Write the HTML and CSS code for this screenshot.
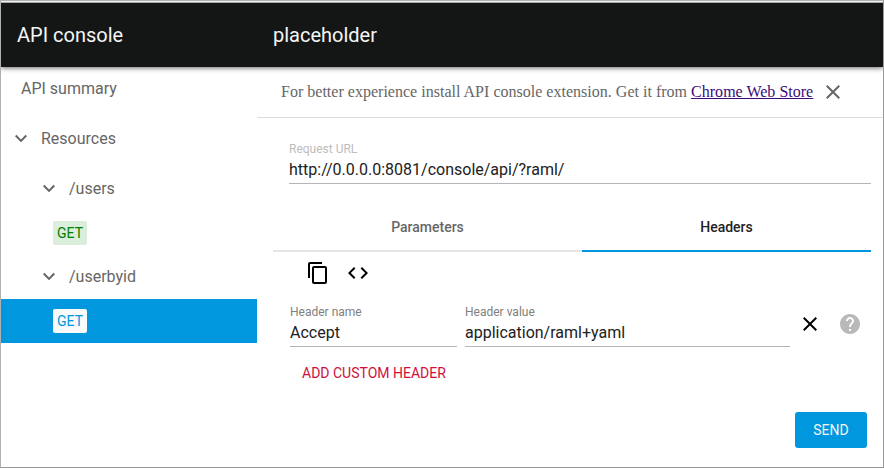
FILE: index.html
```html
<!DOCTYPE html>
<html lang="en">
<head>
<meta charset="utf-8">
<title>API console</title>
<link rel="stylesheet" href="styles.css">
</head>
<body>
<div class="window">
  <div class="edge"></div>
  <header class="toolbar">
    <div class="brand"><span>API console</span></div>
    <h1 class="title"><span>placeholder</span></h1>
  </header>
  <div class="body">
    <nav class="sidebar">
      <a class="row summary"><span>API summary</span></a>
      <a class="row group">
        <svg class="chevron" viewBox="0 0 24 24"><path d="M7.41 7.84L12 12.42l4.59-4.58L18 9.25l-6 6-6-6z"/></svg>
        <span>Resources</span>
      </a>
      <a class="row endpoint">
        <svg class="chevron" viewBox="0 0 24 24"><path d="M7.41 7.84L12 12.42l4.59-4.58L18 9.25l-6 6-6-6z"/></svg>
        <span>/users</span>
      </a>
      <a class="row method"><span class="badge">GET</span></a>
      <a class="row endpoint">
        <svg class="chevron" viewBox="0 0 24 24"><path d="M7.41 7.84L12 12.42l4.59-4.58L18 9.25l-6 6-6-6z"/></svg>
        <span>/userbyid</span>
      </a>
      <a class="row method selected"><span class="badge">GET</span></a>
    </nav>
    <main class="main">
      <div class="banner">
        <p class="notice">For better experience install API console extension. Get it from <a class="store">Chrome Web Store</a></p>
        <svg class="icon muted" viewBox="0 0 24 24"><path d="M19 6.41L17.59 5 12 10.59 6.41 5 5 6.41 10.59 12 5 17.59 6.41 19 12 13.41 17.59 19 19 17.59 13.41 12z"/></svg>
      </div>
      <div class="field url">
        <label class="label light">Request URL</label>
        <div class="value">http://0.0.0.0:8081/console/api/?raml/</div>
      </div>
      <div class="tabs">
        <div class="tab"><span>Parameters</span></div>
        <div class="tab active"><span>Headers</span></div>
      </div>
      <div class="tools">
        <svg class="icon" viewBox="0 0 24 24"><path d="M16 1H4c-1.1 0-2 .9-2 2v14h2V3h12V1zm3 4H8c-1.1 0-2 .9-2 2v14c0 1.1.9 2 2 2h11c1.1 0 2-.9 2-2V7c0-1.1-.9-2-2-2zm0 16H8V7h11v14z"/></svg>
        <svg class="icon" viewBox="0 0 24 24"><path d="M9.4 16.6L4.8 12l4.6-4.6L8 6l-6 6 6 6 1.4-1.4zm5.2 0l4.6-4.6-4.6-4.6L16 6l6 6-6 6-1.4-1.4z"/></svg>
      </div>
      <div class="header-form">
        <div class="field name">
          <label class="label">Header name</label>
          <div class="value">Accept</div>
        </div>
        <div class="field content">
          <label class="label">Header value</label>
          <div class="value">application/raml+yaml</div>
        </div>
        <div class="actions">
          <svg class="icon" viewBox="0 0 24 24"><path d="M19 6.41L17.59 5 12 10.59 6.41 5 5 6.41 10.59 12 5 17.59 6.41 19 12 13.41 17.59 19 19 17.59 13.41 12z"/></svg>
          <svg class="icon faint" viewBox="0 0 24 24"><path d="M12 2C6.48 2 2 6.48 2 12s4.48 10 10 10 10-4.48 10-10S17.52 2 12 2zm1 17h-2v-2h2v2zm2.07-7.75l-.9.92C13.45 12.9 13 13.5 13 15h-2v-.5c0-1.1.45-2.1 1.17-2.83l1.24-1.26c.37-.36.59-.86.59-1.41 0-1.1-.9-2-2-2s-2 .9-2 2H8c0-2.21 1.79-4 4-4s4 1.79 4 4c0 .88-.36 1.68-.93 2.25z"/></svg>
        </div>
      </div>
      <div class="add">ADD CUSTOM HEADER</div>
      <div class="footer"><button class="send">SEND</button></div>
    </main>
  </div>
</div>
</body>
</html>
```
FILE: styles.css
```css
* { box-sizing: border-box; }
body { margin: 0; font-family: Roboto, sans-serif; font-size: 16px; color: #212121; }
svg { display: block; flex: none; }

.window {
  width: 884px;
  height: 468px;
  border: 1px solid #999;
  border-left-color: #b0b0b0;
  border-top-color: #b0b0b0;
  background: #fff;
  display: flex;
  flex-direction: column;
  overflow: hidden;
}

.edge { flex: none; height: 2px; background: #f0f0f0; border-bottom: 1px solid #a8a8a8; }

.toolbar {
  flex: none;
  height: 64px;
  background: #141615;
  color: #f5f5f5;
  display: flex;
  align-items: center;
  box-shadow: 0 1px 5px rgba(0, 0, 0, .6);
  clip-path: inset(0 0 -10px 0);
  position: relative;
  font-size: 20px;
}
.brand { width: 256px; padding-left: 16px; }
.title { margin: 0; padding-left: 16px; font-size: 20px; font-weight: 400; }

.body { flex: 1; display: flex; min-height: 0; }

.sidebar { width: 256px; flex: none; color: #666; }
.row { display: flex; align-items: center; height: 44px; }
.row > span:not(.badge) { padding-bottom: 2px; }
.summary { padding-left: 20px; margin-bottom: 6px; }
.group { padding-left: 8px; margin-bottom: 6px; gap: 8px; }
.endpoint { padding-left: 36px; gap: 8px; }
.method { padding-left: 52px; }
.chevron { width: 24px; height: 24px; fill: #666; }
.badge {
  width: 34px;
  height: 24px;
  line-height: 24px;
  text-align: center;
  font-size: 14px;
  border-radius: 2px;
  background: #dbeedb;
  color: #008000;
}
.selected { background: #0097df; }
.selected .badge { background: #fafafa; color: #0097df; }

.main { flex: 1; display: flex; flex-direction: column; }
.banner {
  height: 51px;
  padding-left: 24px;
  border-bottom: 1px solid #dcdcdc;
  display: flex;
  align-items: center;
  gap: 8px;
}
.notice { margin: 0; font-family: "Liberation Serif", serif; font-size: 16px; letter-spacing: .013px; color: #666; white-space: nowrap; }
.store { color: #3b0b7c; text-decoration: underline; }
.icon { width: 24px; height: 24px; fill: #000; }
.muted { fill: #666; }
.faint { fill: #b9b9b9; }

.field { border-bottom: 1px solid #b5b5b5; }
.label { display: block; font-size: 12px; line-height: 16px; color: #808080; }
.light { color: #bcbcbc; }
.value { font-size: 16px; line-height: 24px; white-space: nowrap; }
.url { margin: 23px 12px 0 32px; height: 43px; }
.url .value { line-height: 25px; }

.tabs { display: flex; margin: 20px 12px 0 16px; height: 48px; font-size: 14px; font-weight: 500; }
.tab {
  width: 309px;
  border-bottom: 2px solid #e5e5e5;
  color: #666;
  display: flex;
  align-items: center;
  justify-content: center;
}
.active { width: 289px; border-color: #0097df; color: #212121; }

.tools { display: flex; gap: 16px; padding: 9px 0 0 49px; }
.header-form { display: flex; margin: 19px 0 0 33px; height: 43px; }
.name { width: 167px; margin-right: 8px; }
.content { width: 325px; }
.header-form .value { line-height: 26px; }
.actions { display: flex; gap: 16px; padding: 8px 0 0 8px; }
.add { margin: 16px 0 0 45px; height: 20px; line-height: 20px; font-size: 14px; color: #d0103a; }
.footer { display: flex; justify-content: flex-end; margin: 29px 16px 0 0; }
.send {
  width: 72px;
  height: 36px;
  padding: 0;
  border: 0;
  border-radius: 3px;
  background: #0097df;
  color: #f5f5f5;
  font: 14px Roboto, sans-serif;
}
```
